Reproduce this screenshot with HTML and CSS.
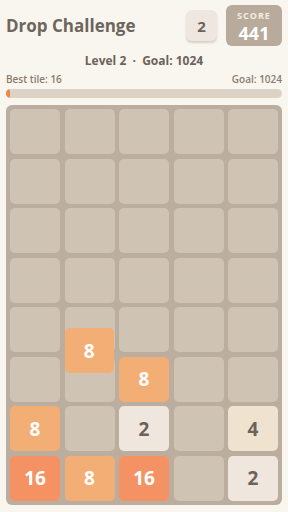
FILE: index.html
```html
<!DOCTYPE html>
<html>
<head>
    <title>Drop Challenge</title>
    <link rel="stylesheet" href="styles.css">
</head>
<body>

    <div class="app">
        <div class="header">
            <h1>Drop Challenge</h1>
            <div class="next">2</div>
            <div class="score">
                <div class="score-label">SCORE</div>
                <div class="score-value">441</div>
            </div>
        </div>

        <div class="level">Level 2 &nbsp;·&nbsp; Goal: 1024</div>

        <div class="progress-info">
            <span>Best tile: 16</span>
            <span>Goal: 1024</span>
        </div>
        <div class="progress"><div class="progress-fill" style="width: 1.6%"></div></div>

        <div class="board">
            <div class="cell"></div><div class="cell"></div><div class="cell"></div><div class="cell"></div><div class="cell"></div>
            <div class="cell"></div><div class="cell"></div><div class="cell"></div><div class="cell"></div><div class="cell"></div>
            <div class="cell"></div><div class="cell"></div><div class="cell"></div><div class="cell"></div><div class="cell"></div>
            <div class="cell"></div><div class="cell"></div><div class="cell"></div><div class="cell"></div><div class="cell"></div>
            <div class="cell"></div><div class="cell"></div><div class="cell"></div><div class="cell"></div><div class="cell"></div>
            <div class="cell"></div><div class="cell"></div><div class="cell tile t8">8</div><div class="cell"></div><div class="cell"></div>
            <div class="cell tile t8">8</div><div class="cell"></div><div class="cell tile t2">2</div><div class="cell"></div><div class="cell tile t4">4</div>
            <div class="cell tile t16">16</div><div class="cell tile t8">8</div><div class="cell tile t16">16</div><div class="cell"></div><div class="cell tile t2">2</div>

            <!-- tile still dropping -->
            <div class="tile t8 falling">8</div>
        </div>
    </div>

</body>
</html>
```

FILE: styles.css
```css
body {
    margin: 0;
    background-color: #f9f6ef;
    font-family: "Open Sans", "Noto Sans", sans-serif;
    color: #6b625a;
}

.app {
    padding: 5px 6px;
}

.header {
    display: flex;
    align-items: center;
    height: 41px;
}

h1 {
    flex: 1;
    margin: 0;
    font-size: 17px;
    font-weight: 700;
    color: #6e655d;
}

.next {
    width: 31px;
    height: 31px;
    margin-right: 9px;
    border-radius: 6px;
    background-color: #efe6df;
    box-shadow: 0 2px 2px rgba(120, 100, 80, 0.25);
    display: flex;
    align-items: center;
    justify-content: center;
    font-size: 15px;
    font-weight: 700;
}

.score {
    width: 56px;
    height: 41px;
    border-radius: 6px;
    background-color: #b9ab9b;
    text-align: center;
    box-sizing: border-box;
    padding-top: 5px;
}

.score-label {
    font-size: 9px;
    font-weight: 700;
    letter-spacing: 1px;
    color: #f3ede4;
    line-height: 12px;
}

.score-value {
    margin-top: 2px;
    font-size: 18px;
    font-weight: 700;
    color: #fff;
    line-height: 18px;
}

.level {
    margin-top: 7px;
    text-align: center;
    font-size: 12px;
    font-weight: 700;
    line-height: 16px;
}

.progress-info {
    display: flex;
    justify-content: space-between;
    margin-top: 3px;
    font-size: 10px;
    font-weight: 600;
    line-height: 14px;
    color: #8a7b6c;
}

.progress {
    margin-top: 3px;
    height: 9px;
    border-radius: 5px;
    background-color: #ddd2c6;
    overflow: hidden;
}

.progress-fill {
    height: 100%;
    min-width: 4px;
    border-radius: 5px;
    background-color: #f0874a;
}

.board {
    position: relative;
    margin-top: 7px;
    padding: 4px;
    border-radius: 6px;
    background-color: #bcae9f;
    display: grid;
    grid-template-columns: repeat(5, 1fr);
    grid-auto-rows: 45px;
    gap: 4.5px;
}

.cell {
    border-radius: 5px;
    background-color: #cfc3b4;
}

.tile {
    display: flex;
    align-items: center;
    justify-content: center;
    border-radius: 5px;
    font-size: 19px;
    font-weight: 700;
    color: #fff;
}

.t2 {
    background-color: #efe6de;
    color: #6b625a;
}

.t4 {
    background-color: #efe2cf;
    color: #6b625a;
}

.t8 {
    background-color: #f3ae76;
}

.t16 {
    background-color: #f49263;
}

.falling {
    position: absolute;
    left: 58.5px;
    top: 223px;
    width: 49.5px;
    height: 45px;
}
```
